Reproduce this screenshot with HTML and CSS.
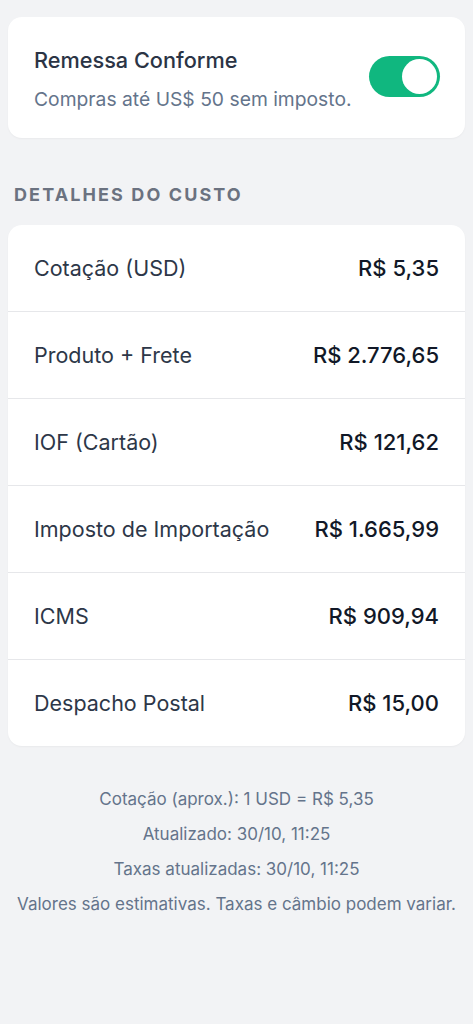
FILE: index.html
```html
<!DOCTYPE html>
<html lang="pt-BR">
<head>
<meta charset="utf-8">
<meta name="viewport" content="width=device-width, initial-scale=1">
<title>Detalhes do custo</title>
<link rel="stylesheet" href="styles.css">
</head>
<body>
<main class="page">
  <section class="card toggle-card">
    <div class="toggle-text">
      <h2 class="toggle-title">Remessa Conforme</h2>
      <p class="toggle-sub">Compras até US$ 50 sem imposto.</p>
    </div>
    <div class="switch"><span class="knob"></span></div>
  </section>

  <h3 class="section-title">DETALHES DO CUSTO</h3>

  <section class="card list">
    <div class="row"><span class="label">Cotação (USD)</span><span class="value">R$ 5,35</span></div>
    <div class="row"><span class="label">Produto + Frete</span><span class="value">R$ 2.776,65</span></div>
    <div class="row"><span class="label">IOF (Cartão)</span><span class="value">R$ 121,62</span></div>
    <div class="row"><span class="label">Imposto de Importação</span><span class="value">R$ 1.665,99</span></div>
    <div class="row"><span class="label">ICMS</span><span class="value">R$ 909,94</span></div>
    <div class="row"><span class="label">Despacho Postal</span><span class="value">R$ 15,00</span></div>
  </section>

  <footer class="notes">
    <p>Cotação (aprox.): 1 USD = R$ 5,35</p>
    <p>Atualizado: 30/10, 11:25</p>
    <p>Taxas atualizadas: 30/10, 11:25</p>
    <p>Valores são estimativas. Taxas e câmbio podem variar.</p>
  </footer>
</main>
</body>
</html>
```
FILE: styles.css
```css
* { box-sizing: border-box; }
html, body { margin: 0; padding: 0; }
body {
  background: #f2f3f5;
  font-family: Inter, "Noto Sans", "DejaVu Sans", sans-serif;
  width: 473px;
  min-height: 1024px;
}
.page {
  padding: 17px 8px 40px;
}
.card {
  background: #ffffff;
  border-radius: 14px;
  box-shadow: 0 1px 2px rgba(0, 0, 0, 0.04);
}
.toggle-card {
  display: flex;
  align-items: center;
  justify-content: space-between;
  padding: 29px 25px 27px 26px;
}
.toggle-title {
  margin: 0;
  font-size: 21.7px;
  line-height: 28px;
  font-weight: 500;
  color: #2b3445;
}
.toggle-sub {
  margin: 13px 0 0;
  font-size: 19.3px;
  line-height: 24px;
  color: #64748b;
}
.switch {
  width: 71px;
  height: 41px;
  border-radius: 21px;
  background: #10b77f;
  display: flex;
  align-items: center;
  justify-content: flex-end;
  padding: 3px;
  margin-top: -4px;
  flex-shrink: 0;
}
.knob {
  width: 35px;
  height: 35px;
  border-radius: 50%;
  background: #ffffff;
}
.section-title {
  margin: 45px 0 18px 6px;
  font-size: 18px;
  line-height: 24px;
  font-weight: 700;
  letter-spacing: 2.1px;
  color: #6b7280;
}
.list {
  display: flex;
  flex-direction: column;
}
.row {
  display: flex;
  align-items: center;
  justify-content: space-between;
  height: 87px;
  padding: 0 26px;
  border-top: 1px solid #e6e7ea;
}
.row:first-child { border-top: none; height: 86px; }
.label {
  font-size: 21.5px;
  color: #2d3748;
}
.value {
  font-size: 22px;
  font-weight: 500;
  color: #111827;
}
.notes {
  margin-top: 36px;
  text-align: center;
  color: #64748b;
  font-size: 17px;
  line-height: 35px;
}
.notes p { margin: 0; }
```
